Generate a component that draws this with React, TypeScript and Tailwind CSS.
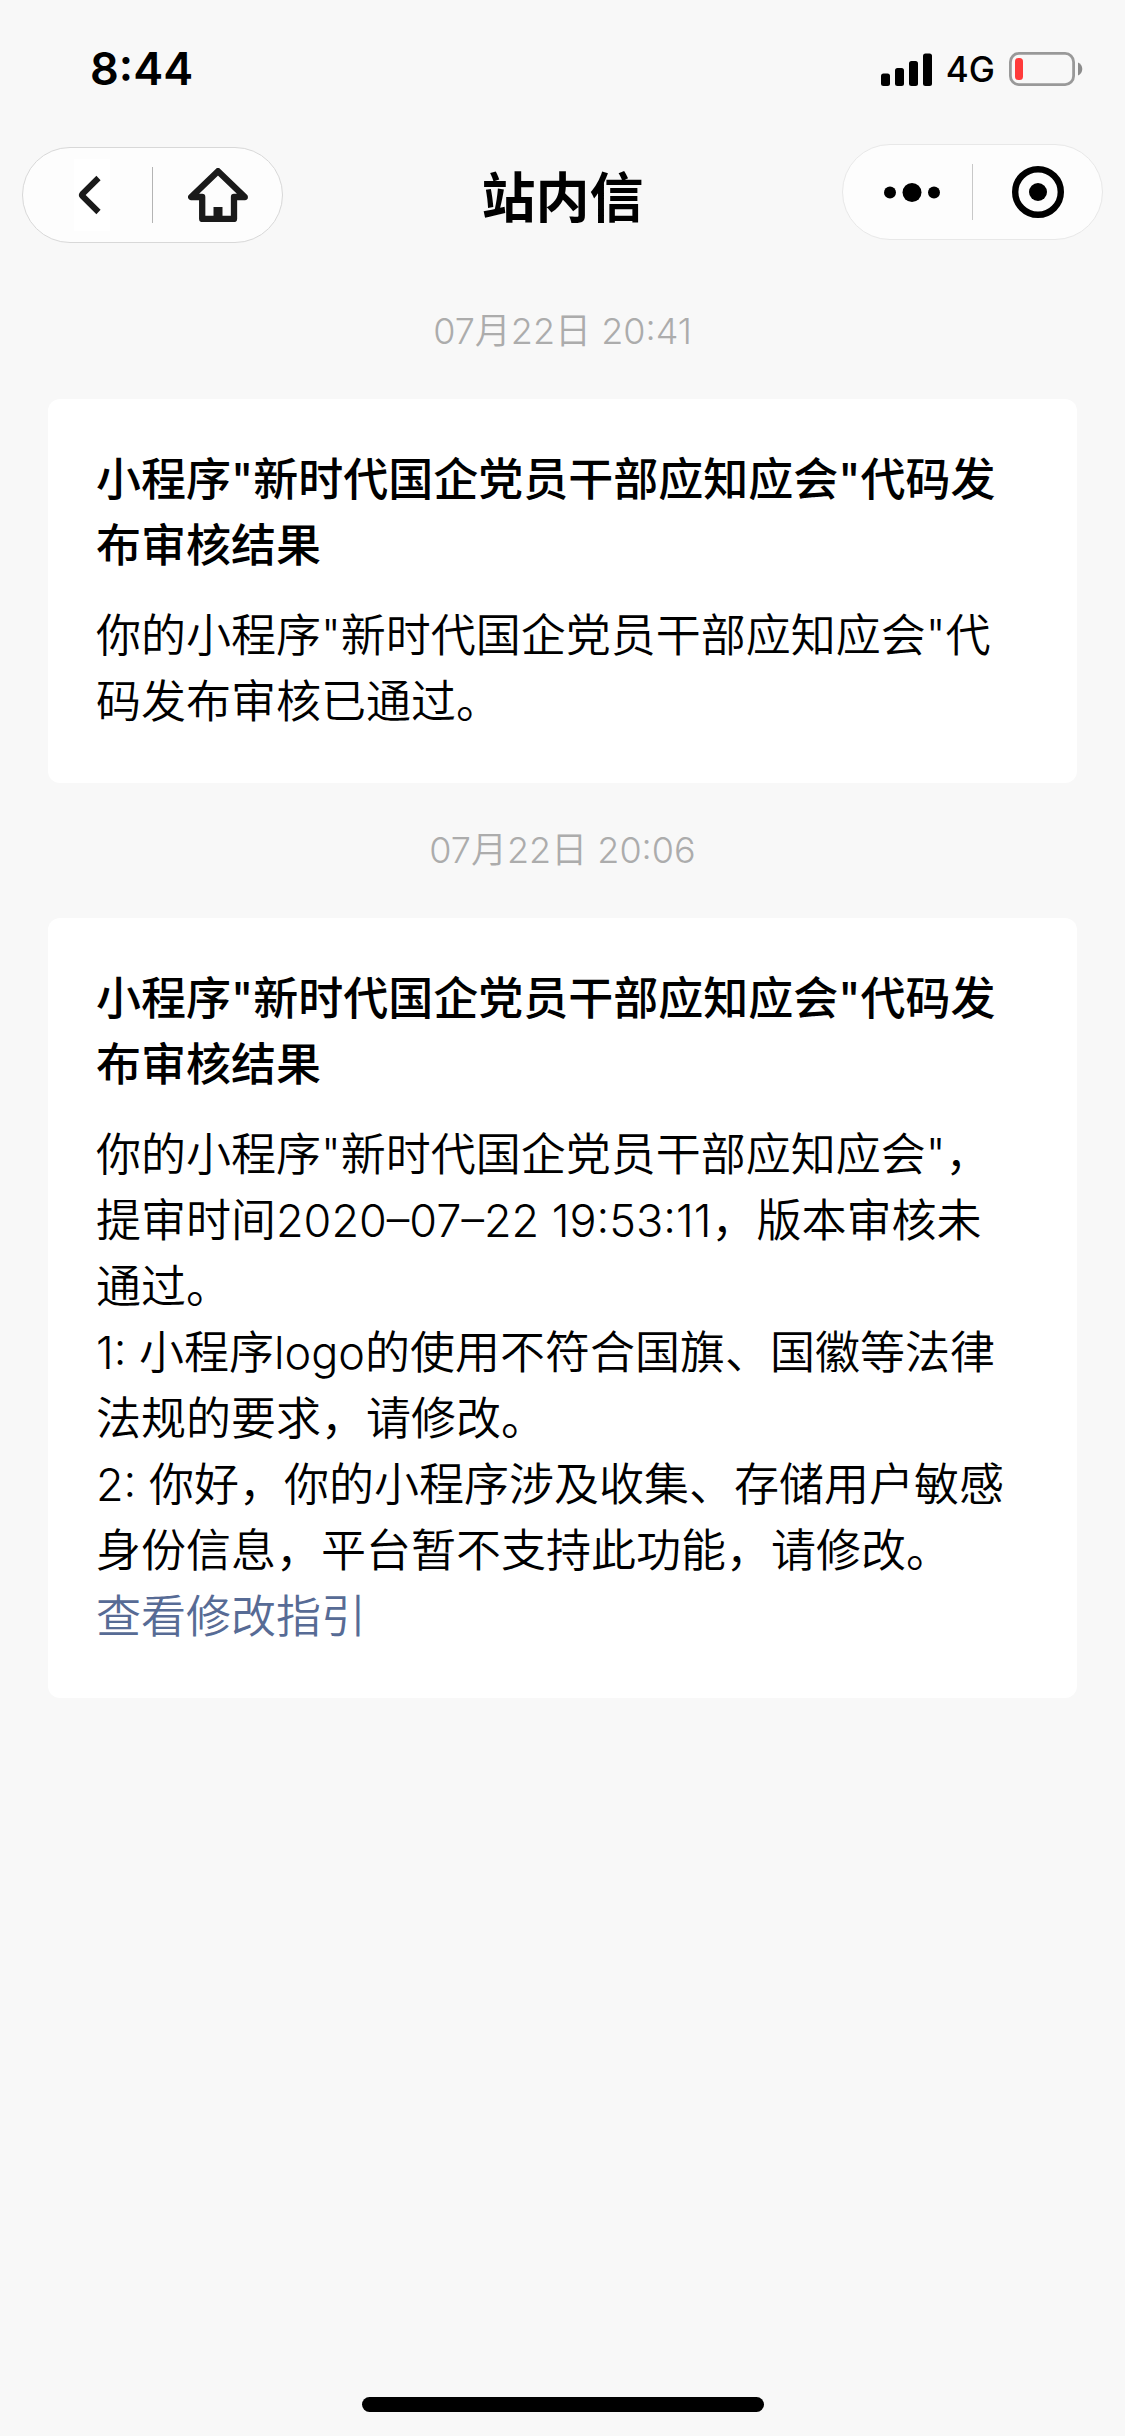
import type { ReactNode } from 'react';

type Message = {
  id: string;
  time: string;
  title: string;
  paragraphs: string[];
  link?: { label: string; href: string };
};

const messages: Message[] = [
  {
    id: 'm1',
    time: '07月22日 20:41',
    title: '小程序"新时代国企党员干部应知应会"代码发布审核结果',
    paragraphs: ['你的小程序"新时代国企党员干部应知应会"代码发布审核已通过。'],
  },
  {
    id: 'm2',
    time: '07月22日 20:06',
    title: '小程序"新时代国企党员干部应知应会"代码发布审核结果',
    paragraphs: [
      '你的小程序"新时代国企党员干部应知应会"，提审时间2020–07–22 19:53:11，版本审核未通过。',
      '1: 小程序logo的使用不符合国旗、国徽等法律法规的要求，请修改。',
      '2: 你好，你的小程序涉及收集、存储用户敏感身份信息，平台暂不支持此功能，请修改。',
    ],
    link: { label: '查看修改指引', href: '#guide' },
  },
];

function StatusBar() {
  return (
    <div className="flex h-[132px] items-start justify-between pt-[42px] pr-[42px] pl-[90px]">
      <div className="text-[45px] leading-[54px] font-semibold">8:44</div>
      <div className="flex h-[54px] items-center gap-[14px]">
        <svg className="h-[33px] w-[51px]" viewBox="0 0 51 33" aria-hidden="true">
          <rect x="0" y="20.5" width="9" height="12.5" rx="2.5" />
          <rect x="14" y="15" width="9" height="18" rx="2.5" />
          <rect x="28" y="8" width="9" height="25" rx="2.5" />
          <rect x="42" y="0.5" width="9" height="32.5" rx="2.5" />
        </svg>
        <span className="text-[35px] leading-[54px] font-medium">4G</span>
        <svg className="h-[34px] w-[74px]" viewBox="0 0 74 34" aria-hidden="true">
          <rect x="1.4" y="1.4" width="63.2" height="31.2" rx="8.5" fill="none" stroke="#999" strokeWidth="2.8" />
          <rect x="6" y="6" width="8" height="22" rx="3.5" fill="#ff3b3b" />
          <path d="M69 10.5c2.600 1.200 4.300 3.600 4.300 6.500s-1.700 5.300-4.300 6.500z" fill="#8c8c8c" />
        </svg>
      </div>
    </div>
  );
}

function Capsule({ border, divider, left, right }: { border: string; divider: string; left: ReactNode; right: ReactNode }) {
  return (
    <div className={`grid h-24 w-[261px] grid-cols-[1fr_1px_1fr] items-center rounded-full border bg-[#fdfdfd] ${border}`}>
      {left}
      <span className={`h-14 ${divider}`} />
      {right}
    </div>
  );
}

function NavBar() {
  return (
    <header className="grid h-[132px] grid-cols-[1fr_auto_1fr] items-start px-[22px]">
      <div className="flex h-[126px] items-center">
        <Capsule
          border="border-[#d8d8d8]"
          divider="bg-[#b4b4b4]"
          left={
            <button type="button" aria-label="返回" className="flex h-full items-center justify-center pl-2">
              <svg className="h-[72px] w-9 bg-white" viewBox="0 0 36 72" fill="none" stroke="#1a1a1a" strokeWidth="6" aria-hidden="true">
                <path d="M24.500 19 8.300 35 Q7.500 36 8.300 37 L24.500 53" />
              </svg>
            </button>
          }
          right={
            <button type="button" aria-label="首页" className="flex h-full items-center justify-center">
              <svg className="h-[54px] w-[60px]" viewBox="0 0 60 54" fill="none" stroke="#1a1a1a" aria-hidden="true">
                <path
                  d="M30 3.200 3.200 29H14.200V51H46V29H56.800Z"
                  strokeWidth="6.300"
                  strokeLinejoin="round"
                />
                <path d="M30 39V51" strokeWidth="9" />
              </svg>
            </button>
          }
        />
      </div>
      <h1 className="text-[54px] leading-[134px] font-semibold">站内信</h1>
      <div className="flex h-[120px] items-center justify-end">
        <Capsule
          border="border-[#e8e8e8]"
          divider="bg-[#c8c8c8]"
          left={
            <button type="button" aria-label="更多" className="flex h-full items-center justify-center pl-2">
              <svg className="h-5 w-14" viewBox="0 0 56 20" aria-hidden="true">
                <circle cx="6" cy="10.500" r="6" />
                <circle cx="28" cy="10.500" r="9.500" />
                <circle cx="50" cy="10.500" r="6" />
              </svg>
            </button>
          }
          right={
            <button type="button" aria-label="关闭" className="flex h-full items-center justify-center">
              <svg className="h-[52px] w-[52px]" viewBox="0 0 52 52" aria-hidden="true">
                <circle cx="26" cy="26" r="22.800" fill="none" stroke="#000" strokeWidth="6.400" />
                <circle cx="26" cy="26" r="9" />
              </svg>
            </button>
          }
        />
      </div>
    </header>
  );
}

function MessageItem({ message }: { message: Message }) {
  return (
    <li>
      <time className="block text-center text-[36px] leading-[135px] font-[350] text-[#acacac]">{message.time}</time>
      <article className="rounded-xl bg-white py-12 pr-14 pl-12 text-[45px] leading-[66px] font-[350]">
        <h2 className="mb-6 font-medium">{message.title}</h2>
        {message.paragraphs.map(text => (
          <p key={text}>{text}</p>
        ))}
        {message.link && (
          <a href={message.link.href} className="block text-[#576b95]">
            {message.link.label}
          </a>
        )}
      </article>
    </li>
  );
}

export default function App() {
  return (
    <div className="flex min-h-screen flex-col bg-[#f8f8f8] font-['Inter','Noto_Sans_CJK_SC',sans-serif] text-black" lang="zh-CN">
      <StatusBar />
      <NavBar />
      <main className="px-12">
        <ul>
          {messages.map(message => (
            <MessageItem key={message.id} message={message} />
          ))}
        </ul>
      </main>

      {/* Home indicator */}
      <div className="mt-auto flex justify-center pt-12 pb-6">
        <div className="h-[15px] w-[402px] rounded-full bg-black" />
      </div>
    </div>
  );
}
